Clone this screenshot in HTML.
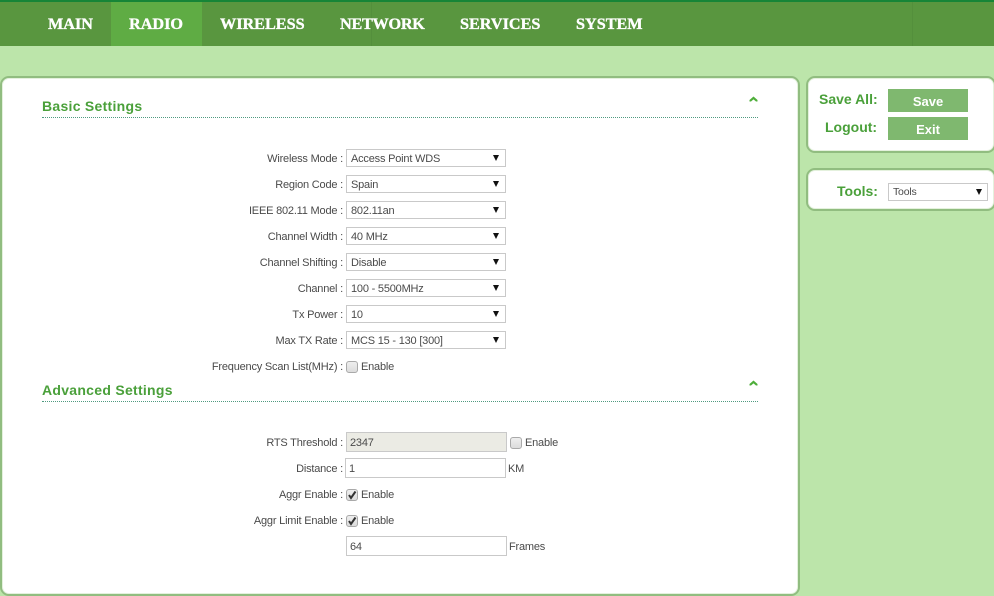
<!DOCTYPE html>
<html>
<head>
<meta charset="utf-8">
<style>
html,body{margin:0;padding:0}
body{width:994px;height:556px;overflow:hidden;background:#bce5aa;position:relative;font-family:"Liberation Sans",sans-serif;font-size:11px;letter-spacing:-.2px;color:#4a4a4a}
div,span{position:absolute;box-sizing:border-box}
.top{left:0;top:0;width:994px;height:46px;background:#59963f;border-top:2px solid #168537}
.n{top:14px;font:bold 16.2px/20px "Liberation Serif",serif;letter-spacing:0;color:#fff;white-space:nowrap;-webkit-text-stroke:.35px #fff}
.panel{background:#fff;border:2px solid #91bd80;border-radius:9px;box-shadow:inset 0 0 0 1px #e4f1dd}
.h{left:42px;font:bold 14px/16px "Liberation Sans",sans-serif;color:#4aa03a;letter-spacing:.28px;white-space:nowrap}
.rule{left:42px;width:716px;height:0;border-top:1px dotted #4f9a80}
.l{right:651px;white-space:nowrap;line-height:18px}
.s{left:346px;width:160px;height:18px;background:#fff;border:1px solid #c9c9c9;padding-left:4px;line-height:18px;white-space:nowrap}
.s:after,.t:after{content:"";position:absolute;right:6px;top:5px;border-left:3px solid transparent;border-right:3px solid transparent;border-top:6px solid #111}
.i{width:161px;height:20px;background:#fff;border:1px solid #c9c9c9;padding-left:3px;line-height:20px}
.c{left:346px;width:12px;height:12px;border:1px solid #a9a9a9;border-radius:3px;background:linear-gradient(#eee,#dcdcdc)}
.c svg{position:absolute;left:0;top:0}
.e{white-space:nowrap;line-height:18px}
.g{font:bold 14px/16px "Liberation Sans",sans-serif;color:#4aa03a;letter-spacing:0;white-space:nowrap}
.b{left:888px;width:80px;height:23px;background:#7fb86f;color:#fff;text-align:center;letter-spacing:0;font:bold 13px/25px "Liberation Sans",sans-serif}
.t{left:888px;top:183px;width:100px;height:18px;background:#fff;border:1px solid #c9c9c9;padding-left:4px;font-size:10.5px;line-height:17px}
.t:after{right:5px;top:5px}
</style>
</head>
<body>
<div class="top"></div>
<div style="left:111px;top:2px;width:91px;height:44px;background:#5fac44"></div>
<div style="left:371px;top:2px;width:1px;height:44px;background:#548f3c"></div>
<div style="left:912px;top:2px;width:1px;height:44px;background:#548f3c"></div>
<span class="n" style="left:48px">MAIN</span>
<span class="n" style="left:129px">RADIO</span>
<span class="n" style="left:220px">WIRELESS</span>
<span class="n" style="left:340px;letter-spacing:-.25px">NETWORK</span>
<span class="n" style="left:460px">SERVICES</span>
<span class="n" style="left:576px">SYSTEM</span>

<div class="panel" style="left:0;top:76px;width:800px;height:520px"></div>
<div class="panel" style="left:806px;top:76px;width:190px;height:77px"></div>
<div class="panel" style="left:806px;top:168px;width:190px;height:43px"></div>

<span class="h" style="top:98px">Basic Settings</span>
<div class="rule" style="top:117px"></div>
<svg style="position:absolute;left:748px;top:95px" width="11" height="8"><path d="M1.5 5L5.5 1.5L9.5 5V6.5H8L5.5 4.4L3 6.5H1.5Z" fill="#4eae3a"/></svg>

<span class="l" style="top:150px">Wireless Mode :</span><div class="s" style="top:149px">Access Point WDS</div>
<span class="l" style="top:176px">Region Code :</span><div class="s" style="top:175px">Spain</div>
<span class="l" style="top:202px">IEEE 802.11 Mode :</span><div class="s" style="top:201px">802.11an</div>
<span class="l" style="top:228px">Channel Width :</span><div class="s" style="top:227px">40 MHz</div>
<span class="l" style="top:254px">Channel Shifting :</span><div class="s" style="top:253px">Disable</div>
<span class="l" style="top:280px">Channel :</span><div class="s" style="top:279px">100 - 5500MHz</div>
<span class="l" style="top:306px">Tx Power :</span><div class="s" style="top:305px">10</div>
<span class="l" style="top:332px">Max TX Rate :</span><div class="s" style="top:331px">MCS 15 - 130 [300]</div>
<span class="l" style="top:358px">Frequency Scan List(MHz) :</span><div class="c" style="top:361px"></div><span class="e" style="left:361px;top:358px">Enable</span>

<span class="h" style="top:382px">Advanced Settings</span>
<div class="rule" style="top:401px"></div>
<svg style="position:absolute;left:748px;top:379px" width="11" height="8"><path d="M1.5 5L5.5 1.5L9.5 5V6.5H8L5.5 4.4L3 6.5H1.5Z" fill="#4eae3a"/></svg>

<span class="l" style="top:434px">RTS Threshold :</span>
<div class="i" style="left:346px;top:432px;background:#ebebe4">2347</div>
<div class="c" style="left:510px;top:437px"></div><span class="e" style="left:525px;top:434px">Enable</span>

<span class="l" style="top:460px">Distance :</span>
<div class="i" style="left:345px;top:458px">1</div>
<span class="e" style="left:508px;top:460px">KM</span>

<span class="l" style="top:486px">Aggr Enable :</span>
<div class="c" style="top:489px"><svg width="10" height="10"><path d="M2 5L4 8L8.5 1.5" fill="none" stroke="#333" stroke-width="2"/></svg></div>
<span class="e" style="left:361px;top:486px">Enable</span>

<span class="l" style="top:512px">Aggr Limit Enable :</span>
<div class="c" style="top:515px"><svg width="10" height="10"><path d="M2 5L4 8L8.5 1.5" fill="none" stroke="#333" stroke-width="2"/></svg></div>
<span class="e" style="left:361px;top:512px">Enable</span>

<div class="i" style="left:346px;top:536px">64</div>
<span class="e" style="left:509px;top:538px">Frames</span>

<span class="g" style="left:819px;top:91px">Save All:</span>
<div class="b" style="top:89px">Save</div>
<span class="g" style="left:825px;top:119px">Logout:</span>
<div class="b" style="top:117px">Exit</div>
<span class="g" style="left:837px;top:183px">Tools:</span>
<div class="t">Tools</div>
</body>
</html>
